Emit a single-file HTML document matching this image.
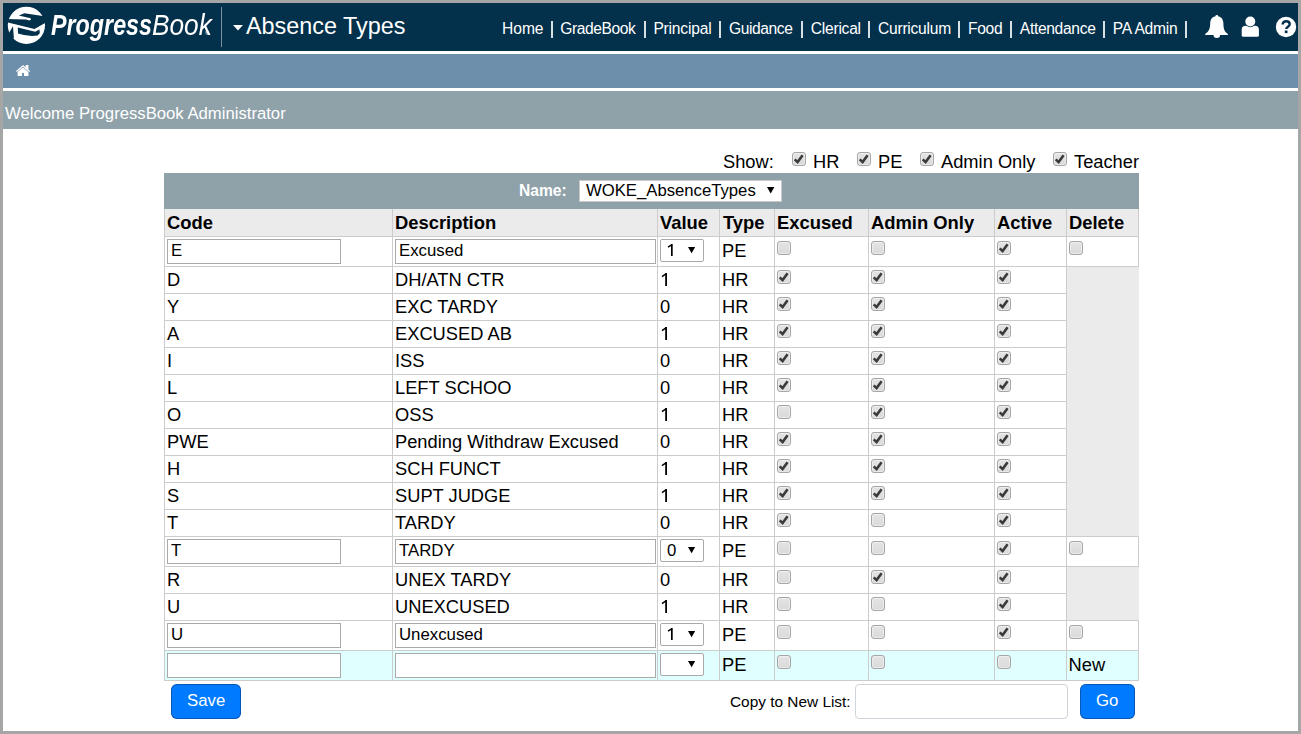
<!DOCTYPE html><html><head><meta charset="utf-8"><style>
html,body{margin:0;padding:0}
body{width:1301px;height:734px;position:relative;overflow:hidden;font-family:"Liberation Sans",sans-serif}
.r,.t,.cb,.inp,.sel,.sel1,.btn{position:absolute}
.t{white-space:pre}
.cb{width:12px;height:12px;border:1px solid #a6a6a6;border-radius:3px;background:linear-gradient(#e4e4e4,#dadada);box-shadow:inset 0 0 0 1px rgba(255,255,255,0.4)}
.cb svg{left:-1px!important;top:-1px!important}
.inp{height:23px;border:1px solid #a9a9a9;background:#fff}
.sel{width:42px;height:21px;border:1px solid #a9a9a9;border-radius:2px;background:#fff;margin-top:-1px}
.sel1{left:579px;top:180px;width:201px;height:20px;border:1px solid #c8c8c8;background:#fff}
.btn{height:35px;background:#007bff;border-radius:6px;box-shadow:inset 0 0 0 1px rgba(10,60,120,0.55);box-sizing:border-box}
</style></head><body><div class="r" style="left:0px;top:0px;width:1301px;height:734px;background:#a6a6a6;"></div>
<div class="r" style="left:3px;top:3px;width:1295px;height:728px;background:#fff;"></div>
<div class="r" style="left:3px;top:3px;width:1295px;height:48px;background:#03304b;"></div>
<div class="r" style="left:3px;top:54px;width:1295px;height:34px;background:#6d8fab;"></div>
<div class="r" style="left:3px;top:91px;width:1295px;height:38px;background:#8fa2aa;"></div>
<svg class="r" style="left:0;top:0" width="50" height="50" viewBox="0 0 50 50">
<defs><mask id="lm" maskUnits="userSpaceOnUse" x="0" y="0" width="50" height="50"><rect width="50" height="50" fill="#000"/><circle cx="26.4" cy="25.3" r="18.6" fill="#fff"/>
<g fill="#000">
<polygon points="5,18.9 26,19.6 29.3,20.4 31,19.4 30.6,18.3 18.8,15.5 24.4,13.2 46,16.4 46,22.5 34.5,28.9 8,22.4 5,22.2"/>
<polygon points="13,26.2 13.9,38.4 4,41 9.4,32.2"/>
<polygon points="17.8,27.6 35.2,31.8 39.5,29.4 39.8,33.2 37.5,35.4 32,36 24,35 18,33.6"/>
</g></mask></defs>
<rect width="50" height="50" fill="#fff" mask="url(#lm)"/></svg>
<div class="t" style="left:51px;top:9.5px;font-size:29.5px;line-height:29.5px;color:#fff;white-space:nowrap"><span style="display:inline-block;font-weight:bold;font-style:italic;transform:scaleX(0.79);transform-origin:0 0;width:101px">Progress</span><span style="display:inline-block;font-style:italic;transform:scaleX(0.89);transform-origin:0 0">Book</span></div>
<div class="t" style="left:205px;top:31px;font-size:5px;line-height:5px;color:#fff">&reg;</div>
<div class="r" style="left:221px;top:7px;width:1px;height:40px;background:#7d90a0;"></div>
<svg class="r" style="left:233px;top:25px" width="10" height="6" viewBox="0 0 10 6"><polygon points="0,0 10,0 5,5.5" fill="#fff"/></svg>
<div class="t" style="left:246px;top:15px;font-size:23.4px;line-height:23.4px;font-weight:normal;color:#fff;">Absence Types</div>
<div class="t" style="left:502.1px;top:21px;font-size:15.6px;line-height:15.6px;font-weight:normal;color:#fff;letter-spacing:-0.07px">Home</div>
<div class="t" style="left:560.2px;top:21px;font-size:15.6px;line-height:15.6px;font-weight:normal;color:#fff;letter-spacing:-0.4px">GradeBook</div>
<div class="t" style="left:653.4px;top:21px;font-size:15.6px;line-height:15.6px;font-weight:normal;color:#fff;letter-spacing:-0.2px">Principal</div>
<div class="t" style="left:728.9px;top:21px;font-size:15.6px;line-height:15.6px;font-weight:normal;color:#fff;letter-spacing:-0.39px">Guidance</div>
<div class="t" style="left:810.8px;top:21px;font-size:15.6px;line-height:15.6px;font-weight:normal;color:#fff;letter-spacing:-0.25px">Clerical</div>
<div class="t" style="left:878.1px;top:21px;font-size:15.6px;line-height:15.6px;font-weight:normal;color:#fff;letter-spacing:-0.26px">Curriculum</div>
<div class="t" style="left:968.0px;top:21px;font-size:15.6px;line-height:15.6px;font-weight:normal;color:#fff;letter-spacing:-0.33px">Food</div>
<div class="t" style="left:1019.8px;top:21px;font-size:15.6px;line-height:15.6px;font-weight:normal;color:#fff;letter-spacing:-0.32px">Attendance</div>
<div class="t" style="left:1112.8px;top:21px;font-size:15.6px;line-height:15.6px;font-weight:normal;color:#fff;letter-spacing:-0.21px">PA Admin</div>
<div class="r" style="left:551px;top:21px;width:2px;height:17px;background:rgba(255,255,255,0.85);"></div>
<div class="r" style="left:644px;top:21px;width:2px;height:17px;background:rgba(255,255,255,0.85);"></div>
<div class="r" style="left:719px;top:21px;width:2px;height:17px;background:rgba(255,255,255,0.85);"></div>
<div class="r" style="left:801px;top:21px;width:2px;height:17px;background:rgba(255,255,255,0.85);"></div>
<div class="r" style="left:868px;top:21px;width:2px;height:17px;background:rgba(255,255,255,0.85);"></div>
<div class="r" style="left:958px;top:21px;width:2px;height:17px;background:rgba(255,255,255,0.85);"></div>
<div class="r" style="left:1010px;top:21px;width:2px;height:17px;background:rgba(255,255,255,0.85);"></div>
<div class="r" style="left:1103px;top:21px;width:2px;height:17px;background:rgba(255,255,255,0.85);"></div>
<div class="r" style="left:1185px;top:21px;width:2px;height:17px;background:rgba(255,255,255,0.85);"></div>
<svg class="r" style="left:1204px;top:14px" width="26" height="26" viewBox="0 0 26 26">
<circle cx="12.8" cy="2.3" r="1.4" fill="#fff"/>
<path d="M12.8 2.2 C17.4 2.2 19.4 5.4 19.4 9.6 C19.4 15 20.6 18 23.9 20 L23.9 21 L1.2 21 L1.2 20 C4.5 18 6.2 15 6.2 9.6 C6.2 5.4 8.2 2.2 12.8 2.2 Z" fill="#fff"/>
<path d="M9.5 20.8 a3.3 3.2 0 0 0 6.6 0z" fill="#fff"/>
</svg>
<svg class="r" style="left:1241px;top:16px" width="20" height="22" viewBox="0 0 20 22">
<path d="M0.7 13.8 Q0.7 9.8 4.7 9.8 L13.9 9.8 Q17.9 9.8 17.9 13.8 L17.9 19.2 Q17.9 20.8 16.3 20.8 L2.3 20.8 Q0.7 20.8 0.7 19.2 Z" fill="#fff"/>
<circle cx="9.3" cy="5.5" r="5.7" fill="#03304b"/>
<circle cx="9.3" cy="5.5" r="5" fill="#fff"/>
</svg>
<svg class="r" style="left:1275px;top:16px" width="22" height="22" viewBox="0 0 22 22">
<circle cx="11" cy="11" r="10.2" fill="#fff"/>
<path d="M7.7 8.4 C7.7 6.2 9.3 5.3 11.1 5.3 C13.2 5.3 14.7 6.5 14.7 8.2 C14.7 10.6 11.2 10.9 11.2 13.1" stroke="#03304b" stroke-width="2.4" fill="none"/>
<rect x="9.8" y="14.5" width="2.7" height="2.6" fill="#03304b"/>
</svg>
<svg class="r" style="left:15px;top:64px" width="16" height="13" viewBox="0 0 16 13">
<path d="M1 7 L8 1 L10.6 3.2 L10.6 1 L13.4 1 L13.4 5.6 L15.2 7.2 L14.2 8.1 L8 2.8 L1.9 8.1z" fill="#fff"/>
<path d="M2.6 8 L8 3.5 L13.4 8 L13.4 12 L9 12 L9 9 L7 9 L7 12 L2.6 12z" fill="#fff"/>
</svg>
<div class="t" style="left:5px;top:106px;font-size:16.7px;line-height:16.7px;font-weight:normal;color:#fff;">Welcome ProgressBook Administrator</div>
<div class="t" style="left:723px;top:153px;font-size:18.3px;line-height:18.3px;font-weight:normal;color:#000;">Show:</div>
<div class="cb" style="left:792px;top:152px"><svg width="14" height="14" viewBox="0 0 14 14" style="position:absolute;left:0;top:0"><path d="M2.7 7.4 L5.6 10.1 L10.6 3.3" fill="none" stroke="#3a3a3a" stroke-width="2.6" stroke-linejoin="miter" stroke-linecap="butt"/></svg></div>
<div class="t" style="left:813px;top:153px;font-size:18.3px;line-height:18.3px;font-weight:normal;color:#000;">HR</div>
<div class="cb" style="left:857px;top:152px"><svg width="14" height="14" viewBox="0 0 14 14" style="position:absolute;left:0;top:0"><path d="M2.7 7.4 L5.6 10.1 L10.6 3.3" fill="none" stroke="#3a3a3a" stroke-width="2.6" stroke-linejoin="miter" stroke-linecap="butt"/></svg></div>
<div class="t" style="left:878px;top:153px;font-size:18.3px;line-height:18.3px;font-weight:normal;color:#000;">PE</div>
<div class="cb" style="left:920px;top:152px"><svg width="14" height="14" viewBox="0 0 14 14" style="position:absolute;left:0;top:0"><path d="M2.7 7.4 L5.6 10.1 L10.6 3.3" fill="none" stroke="#3a3a3a" stroke-width="2.6" stroke-linejoin="miter" stroke-linecap="butt"/></svg></div>
<div class="t" style="left:941px;top:153px;font-size:18.3px;line-height:18.3px;font-weight:normal;color:#000;">Admin Only</div>
<div class="cb" style="left:1053px;top:152px"><svg width="14" height="14" viewBox="0 0 14 14" style="position:absolute;left:0;top:0"><path d="M2.7 7.4 L5.6 10.1 L10.6 3.3" fill="none" stroke="#3a3a3a" stroke-width="2.6" stroke-linejoin="miter" stroke-linecap="butt"/></svg></div>
<div class="t" style="left:1074px;top:153px;font-size:18.3px;line-height:18.3px;font-weight:normal;color:#000;">Teacher</div>
<div class="r" style="left:164px;top:173px;width:975px;height:36px;background:#8fa2aa;"></div>
<div class="t" style="left:519px;top:183px;font-size:15.6px;line-height:15.6px;font-weight:bold;color:#fff;">Name:</div>
<div class="sel1"></div>
<div class="t" style="left:586px;top:183px;font-size:16.7px;line-height:16.7px;font-weight:normal;color:#000;">WOKE_AbsenceTypes</div>
<svg class="r" style="left:767px;top:187px" width="8" height="7" viewBox="0 0 8 7"><polygon points="0,0 7.4,0 3.7,6.5" fill="#000"/></svg>
<div class="r" style="left:164px;top:209px;width:975px;height:28px;background:#ebebeb;"></div>
<div class="t" style="left:167px;top:214px;font-size:18.4px;line-height:18.4px;font-weight:bold;color:#000;">Code</div>
<div class="t" style="left:395px;top:214px;font-size:18.4px;line-height:18.4px;font-weight:bold;color:#000;">Description</div>
<div class="t" style="left:660px;top:214px;font-size:18.4px;line-height:18.4px;font-weight:bold;color:#000;">Value</div>
<div class="t" style="left:723px;top:214px;font-size:18.4px;line-height:18.4px;font-weight:bold;color:#000;">Type</div>
<div class="t" style="left:777px;top:214px;font-size:18.4px;line-height:18.4px;font-weight:bold;color:#000;">Excused</div>
<div class="t" style="left:871px;top:214px;font-size:18.4px;line-height:18.4px;font-weight:bold;color:#000;">Admin Only</div>
<div class="t" style="left:997px;top:214px;font-size:18.4px;line-height:18.4px;font-weight:bold;color:#000;">Active</div>
<div class="t" style="left:1069px;top:214px;font-size:18.4px;line-height:18.4px;font-weight:bold;color:#000;">Delete</div>
<div class="inp" style="left:167px;top:239px;width:172px"></div>
<div class="inp" style="left:395px;top:239px;width:259px"></div>
<div class="sel" style="left:660px;top:240px"></div>
<svg class="r" style="left:688px;top:247px" width="8" height="7" viewBox="0 0 8 7"><polygon points="0,0 7.2,0 3.6,6.2" fill="#000"/></svg>
<div class="t" style="left:171px;top:243px;font-size:16.8px;line-height:16.8px;font-weight:normal;color:#000;">E</div>
<div class="t" style="left:399px;top:243px;font-size:16.8px;line-height:16.8px;font-weight:normal;color:#000;">Excused</div>
<svg class="r" style="left:667.0px;top:244px" width="6.7" height="12" viewBox="0 0 6.7 12"><rect x="4.0" y="0" width="1.7" height="12" fill="#000"/><path d="M5.02 0.63 L1 3.2" stroke="#000" stroke-width="1.4" fill="none"/></svg>
<div class="t" style="left:722px;top:242px;font-size:18.3px;line-height:18.3px;font-weight:normal;color:#000;">PE</div>
<div class="cb" style="left:777px;top:241px"></div>
<div class="cb" style="left:871px;top:241px"></div>
<div class="cb" style="left:997px;top:241px"><svg width="14" height="14" viewBox="0 0 14 14" style="position:absolute;left:0;top:0"><path d="M2.7 7.4 L5.6 10.1 L10.6 3.3" fill="none" stroke="#3a3a3a" stroke-width="2.6" stroke-linejoin="miter" stroke-linecap="butt"/></svg></div>
<div class="cb" style="left:1069px;top:241px"></div>
<div class="t" style="left:167px;top:271px;font-size:18.3px;line-height:18.3px;font-weight:normal;color:#000;">D</div>
<div class="t" style="left:395px;top:271px;font-size:18.3px;line-height:18.3px;font-weight:normal;color:#000;">DH/ATN CTR</div>
<svg class="r" style="left:660.8px;top:273px" width="7.0" height="13" viewBox="0 0 7.0 13"><rect x="4.2" y="0" width="1.8" height="13" fill="#000"/><path d="M5.28 0.675 L1 3.6" stroke="#000" stroke-width="1.5" fill="none"/></svg>
<div class="t" style="left:722px;top:271px;font-size:18.3px;line-height:18.3px;font-weight:normal;color:#000;">HR</div>
<div class="cb" style="left:777px;top:270px"><svg width="14" height="14" viewBox="0 0 14 14" style="position:absolute;left:0;top:0"><path d="M2.7 7.4 L5.6 10.1 L10.6 3.3" fill="none" stroke="#3a3a3a" stroke-width="2.6" stroke-linejoin="miter" stroke-linecap="butt"/></svg></div>
<div class="cb" style="left:871px;top:270px"><svg width="14" height="14" viewBox="0 0 14 14" style="position:absolute;left:0;top:0"><path d="M2.7 7.4 L5.6 10.1 L10.6 3.3" fill="none" stroke="#3a3a3a" stroke-width="2.6" stroke-linejoin="miter" stroke-linecap="butt"/></svg></div>
<div class="cb" style="left:997px;top:270px"><svg width="14" height="14" viewBox="0 0 14 14" style="position:absolute;left:0;top:0"><path d="M2.7 7.4 L5.6 10.1 L10.6 3.3" fill="none" stroke="#3a3a3a" stroke-width="2.6" stroke-linejoin="miter" stroke-linecap="butt"/></svg></div>
<div class="t" style="left:167px;top:298px;font-size:18.3px;line-height:18.3px;font-weight:normal;color:#000;">Y</div>
<div class="t" style="left:395px;top:298px;font-size:18.3px;line-height:18.3px;font-weight:normal;color:#000;">EXC TARDY</div>
<div class="t" style="left:660px;top:298px;font-size:18.3px;line-height:18.3px;font-weight:normal;color:#000;">0</div>
<div class="t" style="left:722px;top:298px;font-size:18.3px;line-height:18.3px;font-weight:normal;color:#000;">HR</div>
<div class="cb" style="left:777px;top:297px"><svg width="14" height="14" viewBox="0 0 14 14" style="position:absolute;left:0;top:0"><path d="M2.7 7.4 L5.6 10.1 L10.6 3.3" fill="none" stroke="#3a3a3a" stroke-width="2.6" stroke-linejoin="miter" stroke-linecap="butt"/></svg></div>
<div class="cb" style="left:871px;top:297px"><svg width="14" height="14" viewBox="0 0 14 14" style="position:absolute;left:0;top:0"><path d="M2.7 7.4 L5.6 10.1 L10.6 3.3" fill="none" stroke="#3a3a3a" stroke-width="2.6" stroke-linejoin="miter" stroke-linecap="butt"/></svg></div>
<div class="cb" style="left:997px;top:297px"><svg width="14" height="14" viewBox="0 0 14 14" style="position:absolute;left:0;top:0"><path d="M2.7 7.4 L5.6 10.1 L10.6 3.3" fill="none" stroke="#3a3a3a" stroke-width="2.6" stroke-linejoin="miter" stroke-linecap="butt"/></svg></div>
<div class="t" style="left:167px;top:325px;font-size:18.3px;line-height:18.3px;font-weight:normal;color:#000;">A</div>
<div class="t" style="left:395px;top:325px;font-size:18.3px;line-height:18.3px;font-weight:normal;color:#000;">EXCUSED AB</div>
<svg class="r" style="left:660.8px;top:327px" width="7.0" height="13" viewBox="0 0 7.0 13"><rect x="4.2" y="0" width="1.8" height="13" fill="#000"/><path d="M5.28 0.675 L1 3.6" stroke="#000" stroke-width="1.5" fill="none"/></svg>
<div class="t" style="left:722px;top:325px;font-size:18.3px;line-height:18.3px;font-weight:normal;color:#000;">HR</div>
<div class="cb" style="left:777px;top:324px"><svg width="14" height="14" viewBox="0 0 14 14" style="position:absolute;left:0;top:0"><path d="M2.7 7.4 L5.6 10.1 L10.6 3.3" fill="none" stroke="#3a3a3a" stroke-width="2.6" stroke-linejoin="miter" stroke-linecap="butt"/></svg></div>
<div class="cb" style="left:871px;top:324px"><svg width="14" height="14" viewBox="0 0 14 14" style="position:absolute;left:0;top:0"><path d="M2.7 7.4 L5.6 10.1 L10.6 3.3" fill="none" stroke="#3a3a3a" stroke-width="2.6" stroke-linejoin="miter" stroke-linecap="butt"/></svg></div>
<div class="cb" style="left:997px;top:324px"><svg width="14" height="14" viewBox="0 0 14 14" style="position:absolute;left:0;top:0"><path d="M2.7 7.4 L5.6 10.1 L10.6 3.3" fill="none" stroke="#3a3a3a" stroke-width="2.6" stroke-linejoin="miter" stroke-linecap="butt"/></svg></div>
<div class="t" style="left:167px;top:352px;font-size:18.3px;line-height:18.3px;font-weight:normal;color:#000;">I</div>
<div class="t" style="left:395px;top:352px;font-size:18.3px;line-height:18.3px;font-weight:normal;color:#000;">ISS</div>
<div class="t" style="left:660px;top:352px;font-size:18.3px;line-height:18.3px;font-weight:normal;color:#000;">0</div>
<div class="t" style="left:722px;top:352px;font-size:18.3px;line-height:18.3px;font-weight:normal;color:#000;">HR</div>
<div class="cb" style="left:777px;top:351px"><svg width="14" height="14" viewBox="0 0 14 14" style="position:absolute;left:0;top:0"><path d="M2.7 7.4 L5.6 10.1 L10.6 3.3" fill="none" stroke="#3a3a3a" stroke-width="2.6" stroke-linejoin="miter" stroke-linecap="butt"/></svg></div>
<div class="cb" style="left:871px;top:351px"><svg width="14" height="14" viewBox="0 0 14 14" style="position:absolute;left:0;top:0"><path d="M2.7 7.4 L5.6 10.1 L10.6 3.3" fill="none" stroke="#3a3a3a" stroke-width="2.6" stroke-linejoin="miter" stroke-linecap="butt"/></svg></div>
<div class="cb" style="left:997px;top:351px"><svg width="14" height="14" viewBox="0 0 14 14" style="position:absolute;left:0;top:0"><path d="M2.7 7.4 L5.6 10.1 L10.6 3.3" fill="none" stroke="#3a3a3a" stroke-width="2.6" stroke-linejoin="miter" stroke-linecap="butt"/></svg></div>
<div class="t" style="left:167px;top:379px;font-size:18.3px;line-height:18.3px;font-weight:normal;color:#000;">L</div>
<div class="t" style="left:395px;top:379px;font-size:18.3px;line-height:18.3px;font-weight:normal;color:#000;">LEFT SCHOO</div>
<div class="t" style="left:660px;top:379px;font-size:18.3px;line-height:18.3px;font-weight:normal;color:#000;">0</div>
<div class="t" style="left:722px;top:379px;font-size:18.3px;line-height:18.3px;font-weight:normal;color:#000;">HR</div>
<div class="cb" style="left:777px;top:378px"><svg width="14" height="14" viewBox="0 0 14 14" style="position:absolute;left:0;top:0"><path d="M2.7 7.4 L5.6 10.1 L10.6 3.3" fill="none" stroke="#3a3a3a" stroke-width="2.6" stroke-linejoin="miter" stroke-linecap="butt"/></svg></div>
<div class="cb" style="left:871px;top:378px"><svg width="14" height="14" viewBox="0 0 14 14" style="position:absolute;left:0;top:0"><path d="M2.7 7.4 L5.6 10.1 L10.6 3.3" fill="none" stroke="#3a3a3a" stroke-width="2.6" stroke-linejoin="miter" stroke-linecap="butt"/></svg></div>
<div class="cb" style="left:997px;top:378px"><svg width="14" height="14" viewBox="0 0 14 14" style="position:absolute;left:0;top:0"><path d="M2.7 7.4 L5.6 10.1 L10.6 3.3" fill="none" stroke="#3a3a3a" stroke-width="2.6" stroke-linejoin="miter" stroke-linecap="butt"/></svg></div>
<div class="t" style="left:167px;top:406px;font-size:18.3px;line-height:18.3px;font-weight:normal;color:#000;">O</div>
<div class="t" style="left:395px;top:406px;font-size:18.3px;line-height:18.3px;font-weight:normal;color:#000;">OSS</div>
<svg class="r" style="left:660.8px;top:408px" width="7.0" height="13" viewBox="0 0 7.0 13"><rect x="4.2" y="0" width="1.8" height="13" fill="#000"/><path d="M5.28 0.675 L1 3.6" stroke="#000" stroke-width="1.5" fill="none"/></svg>
<div class="t" style="left:722px;top:406px;font-size:18.3px;line-height:18.3px;font-weight:normal;color:#000;">HR</div>
<div class="cb" style="left:777px;top:405px"></div>
<div class="cb" style="left:871px;top:405px"><svg width="14" height="14" viewBox="0 0 14 14" style="position:absolute;left:0;top:0"><path d="M2.7 7.4 L5.6 10.1 L10.6 3.3" fill="none" stroke="#3a3a3a" stroke-width="2.6" stroke-linejoin="miter" stroke-linecap="butt"/></svg></div>
<div class="cb" style="left:997px;top:405px"><svg width="14" height="14" viewBox="0 0 14 14" style="position:absolute;left:0;top:0"><path d="M2.7 7.4 L5.6 10.1 L10.6 3.3" fill="none" stroke="#3a3a3a" stroke-width="2.6" stroke-linejoin="miter" stroke-linecap="butt"/></svg></div>
<div class="t" style="left:167px;top:433px;font-size:18.3px;line-height:18.3px;font-weight:normal;color:#000;">PWE</div>
<div class="t" style="left:395px;top:433px;font-size:18.3px;line-height:18.3px;font-weight:normal;color:#000;">Pending Withdraw Excused</div>
<div class="t" style="left:660px;top:433px;font-size:18.3px;line-height:18.3px;font-weight:normal;color:#000;">0</div>
<div class="t" style="left:722px;top:433px;font-size:18.3px;line-height:18.3px;font-weight:normal;color:#000;">HR</div>
<div class="cb" style="left:777px;top:432px"><svg width="14" height="14" viewBox="0 0 14 14" style="position:absolute;left:0;top:0"><path d="M2.7 7.4 L5.6 10.1 L10.6 3.3" fill="none" stroke="#3a3a3a" stroke-width="2.6" stroke-linejoin="miter" stroke-linecap="butt"/></svg></div>
<div class="cb" style="left:871px;top:432px"><svg width="14" height="14" viewBox="0 0 14 14" style="position:absolute;left:0;top:0"><path d="M2.7 7.4 L5.6 10.1 L10.6 3.3" fill="none" stroke="#3a3a3a" stroke-width="2.6" stroke-linejoin="miter" stroke-linecap="butt"/></svg></div>
<div class="cb" style="left:997px;top:432px"><svg width="14" height="14" viewBox="0 0 14 14" style="position:absolute;left:0;top:0"><path d="M2.7 7.4 L5.6 10.1 L10.6 3.3" fill="none" stroke="#3a3a3a" stroke-width="2.6" stroke-linejoin="miter" stroke-linecap="butt"/></svg></div>
<div class="t" style="left:167px;top:460px;font-size:18.3px;line-height:18.3px;font-weight:normal;color:#000;">H</div>
<div class="t" style="left:395px;top:460px;font-size:18.3px;line-height:18.3px;font-weight:normal;color:#000;">SCH FUNCT</div>
<svg class="r" style="left:660.8px;top:462px" width="7.0" height="13" viewBox="0 0 7.0 13"><rect x="4.2" y="0" width="1.8" height="13" fill="#000"/><path d="M5.28 0.675 L1 3.6" stroke="#000" stroke-width="1.5" fill="none"/></svg>
<div class="t" style="left:722px;top:460px;font-size:18.3px;line-height:18.3px;font-weight:normal;color:#000;">HR</div>
<div class="cb" style="left:777px;top:459px"><svg width="14" height="14" viewBox="0 0 14 14" style="position:absolute;left:0;top:0"><path d="M2.7 7.4 L5.6 10.1 L10.6 3.3" fill="none" stroke="#3a3a3a" stroke-width="2.6" stroke-linejoin="miter" stroke-linecap="butt"/></svg></div>
<div class="cb" style="left:871px;top:459px"><svg width="14" height="14" viewBox="0 0 14 14" style="position:absolute;left:0;top:0"><path d="M2.7 7.4 L5.6 10.1 L10.6 3.3" fill="none" stroke="#3a3a3a" stroke-width="2.6" stroke-linejoin="miter" stroke-linecap="butt"/></svg></div>
<div class="cb" style="left:997px;top:459px"><svg width="14" height="14" viewBox="0 0 14 14" style="position:absolute;left:0;top:0"><path d="M2.7 7.4 L5.6 10.1 L10.6 3.3" fill="none" stroke="#3a3a3a" stroke-width="2.6" stroke-linejoin="miter" stroke-linecap="butt"/></svg></div>
<div class="t" style="left:167px;top:487px;font-size:18.3px;line-height:18.3px;font-weight:normal;color:#000;">S</div>
<div class="t" style="left:395px;top:487px;font-size:18.3px;line-height:18.3px;font-weight:normal;color:#000;">SUPT JUDGE</div>
<svg class="r" style="left:660.8px;top:489px" width="7.0" height="13" viewBox="0 0 7.0 13"><rect x="4.2" y="0" width="1.8" height="13" fill="#000"/><path d="M5.28 0.675 L1 3.6" stroke="#000" stroke-width="1.5" fill="none"/></svg>
<div class="t" style="left:722px;top:487px;font-size:18.3px;line-height:18.3px;font-weight:normal;color:#000;">HR</div>
<div class="cb" style="left:777px;top:486px"><svg width="14" height="14" viewBox="0 0 14 14" style="position:absolute;left:0;top:0"><path d="M2.7 7.4 L5.6 10.1 L10.6 3.3" fill="none" stroke="#3a3a3a" stroke-width="2.6" stroke-linejoin="miter" stroke-linecap="butt"/></svg></div>
<div class="cb" style="left:871px;top:486px"><svg width="14" height="14" viewBox="0 0 14 14" style="position:absolute;left:0;top:0"><path d="M2.7 7.4 L5.6 10.1 L10.6 3.3" fill="none" stroke="#3a3a3a" stroke-width="2.6" stroke-linejoin="miter" stroke-linecap="butt"/></svg></div>
<div class="cb" style="left:997px;top:486px"><svg width="14" height="14" viewBox="0 0 14 14" style="position:absolute;left:0;top:0"><path d="M2.7 7.4 L5.6 10.1 L10.6 3.3" fill="none" stroke="#3a3a3a" stroke-width="2.6" stroke-linejoin="miter" stroke-linecap="butt"/></svg></div>
<div class="t" style="left:167px;top:514px;font-size:18.3px;line-height:18.3px;font-weight:normal;color:#000;">T</div>
<div class="t" style="left:395px;top:514px;font-size:18.3px;line-height:18.3px;font-weight:normal;color:#000;">TARDY</div>
<div class="t" style="left:660px;top:514px;font-size:18.3px;line-height:18.3px;font-weight:normal;color:#000;">0</div>
<div class="t" style="left:722px;top:514px;font-size:18.3px;line-height:18.3px;font-weight:normal;color:#000;">HR</div>
<div class="cb" style="left:777px;top:513px"><svg width="14" height="14" viewBox="0 0 14 14" style="position:absolute;left:0;top:0"><path d="M2.7 7.4 L5.6 10.1 L10.6 3.3" fill="none" stroke="#3a3a3a" stroke-width="2.6" stroke-linejoin="miter" stroke-linecap="butt"/></svg></div>
<div class="cb" style="left:871px;top:513px"></div>
<div class="cb" style="left:997px;top:513px"><svg width="14" height="14" viewBox="0 0 14 14" style="position:absolute;left:0;top:0"><path d="M2.7 7.4 L5.6 10.1 L10.6 3.3" fill="none" stroke="#3a3a3a" stroke-width="2.6" stroke-linejoin="miter" stroke-linecap="butt"/></svg></div>
<div class="inp" style="left:167px;top:539px;width:172px"></div>
<div class="inp" style="left:395px;top:539px;width:259px"></div>
<div class="sel" style="left:660px;top:540px"></div>
<svg class="r" style="left:688px;top:547px" width="8" height="7" viewBox="0 0 8 7"><polygon points="0,0 7.2,0 3.6,6.2" fill="#000"/></svg>
<div class="t" style="left:171px;top:543px;font-size:16.8px;line-height:16.8px;font-weight:normal;color:#000;">T</div>
<div class="t" style="left:399px;top:543px;font-size:16.8px;line-height:16.8px;font-weight:normal;color:#000;">TARDY</div>
<div class="t" style="left:667px;top:543px;font-size:16.8px;line-height:16.8px;font-weight:normal;color:#000;">0</div>
<div class="t" style="left:722px;top:542px;font-size:18.3px;line-height:18.3px;font-weight:normal;color:#000;">PE</div>
<div class="cb" style="left:777px;top:541px"></div>
<div class="cb" style="left:871px;top:541px"></div>
<div class="cb" style="left:997px;top:541px"><svg width="14" height="14" viewBox="0 0 14 14" style="position:absolute;left:0;top:0"><path d="M2.7 7.4 L5.6 10.1 L10.6 3.3" fill="none" stroke="#3a3a3a" stroke-width="2.6" stroke-linejoin="miter" stroke-linecap="butt"/></svg></div>
<div class="cb" style="left:1069px;top:541px"></div>
<div class="t" style="left:167px;top:571px;font-size:18.3px;line-height:18.3px;font-weight:normal;color:#000;">R</div>
<div class="t" style="left:395px;top:571px;font-size:18.3px;line-height:18.3px;font-weight:normal;color:#000;">UNEX TARDY</div>
<div class="t" style="left:660px;top:571px;font-size:18.3px;line-height:18.3px;font-weight:normal;color:#000;">0</div>
<div class="t" style="left:722px;top:571px;font-size:18.3px;line-height:18.3px;font-weight:normal;color:#000;">HR</div>
<div class="cb" style="left:777px;top:570px"></div>
<div class="cb" style="left:871px;top:570px"><svg width="14" height="14" viewBox="0 0 14 14" style="position:absolute;left:0;top:0"><path d="M2.7 7.4 L5.6 10.1 L10.6 3.3" fill="none" stroke="#3a3a3a" stroke-width="2.6" stroke-linejoin="miter" stroke-linecap="butt"/></svg></div>
<div class="cb" style="left:997px;top:570px"><svg width="14" height="14" viewBox="0 0 14 14" style="position:absolute;left:0;top:0"><path d="M2.7 7.4 L5.6 10.1 L10.6 3.3" fill="none" stroke="#3a3a3a" stroke-width="2.6" stroke-linejoin="miter" stroke-linecap="butt"/></svg></div>
<div class="t" style="left:167px;top:598px;font-size:18.3px;line-height:18.3px;font-weight:normal;color:#000;">U</div>
<div class="t" style="left:395px;top:598px;font-size:18.3px;line-height:18.3px;font-weight:normal;color:#000;">UNEXCUSED</div>
<svg class="r" style="left:660.8px;top:600px" width="7.0" height="13" viewBox="0 0 7.0 13"><rect x="4.2" y="0" width="1.8" height="13" fill="#000"/><path d="M5.28 0.675 L1 3.6" stroke="#000" stroke-width="1.5" fill="none"/></svg>
<div class="t" style="left:722px;top:598px;font-size:18.3px;line-height:18.3px;font-weight:normal;color:#000;">HR</div>
<div class="cb" style="left:777px;top:597px"></div>
<div class="cb" style="left:871px;top:597px"></div>
<div class="cb" style="left:997px;top:597px"><svg width="14" height="14" viewBox="0 0 14 14" style="position:absolute;left:0;top:0"><path d="M2.7 7.4 L5.6 10.1 L10.6 3.3" fill="none" stroke="#3a3a3a" stroke-width="2.6" stroke-linejoin="miter" stroke-linecap="butt"/></svg></div>
<div class="inp" style="left:167px;top:623px;width:172px"></div>
<div class="inp" style="left:395px;top:623px;width:259px"></div>
<div class="sel" style="left:660px;top:624px"></div>
<svg class="r" style="left:688px;top:631px" width="8" height="7" viewBox="0 0 8 7"><polygon points="0,0 7.2,0 3.6,6.2" fill="#000"/></svg>
<div class="t" style="left:171px;top:627px;font-size:16.8px;line-height:16.8px;font-weight:normal;color:#000;">U</div>
<div class="t" style="left:399px;top:627px;font-size:16.8px;line-height:16.8px;font-weight:normal;color:#000;">Unexcused</div>
<svg class="r" style="left:667.0px;top:628px" width="6.7" height="12" viewBox="0 0 6.7 12"><rect x="4.0" y="0" width="1.7" height="12" fill="#000"/><path d="M5.02 0.63 L1 3.2" stroke="#000" stroke-width="1.4" fill="none"/></svg>
<div class="t" style="left:722px;top:626px;font-size:18.3px;line-height:18.3px;font-weight:normal;color:#000;">PE</div>
<div class="cb" style="left:777px;top:625px"></div>
<div class="cb" style="left:871px;top:625px"></div>
<div class="cb" style="left:997px;top:625px"><svg width="14" height="14" viewBox="0 0 14 14" style="position:absolute;left:0;top:0"><path d="M2.7 7.4 L5.6 10.1 L10.6 3.3" fill="none" stroke="#3a3a3a" stroke-width="2.6" stroke-linejoin="miter" stroke-linecap="butt"/></svg></div>
<div class="cb" style="left:1069px;top:625px"></div>
<div class="r" style="left:164px;top:651px;width:974px;height:29px;background:#e0ffff;"></div>
<div class="inp" style="left:167px;top:653px;width:172px"></div>
<div class="inp" style="left:395px;top:653px;width:259px"></div>
<div class="sel" style="left:660px;top:654px"></div>
<svg class="r" style="left:688px;top:661px" width="8" height="7" viewBox="0 0 8 7"><polygon points="0,0 7.2,0 3.6,6.2" fill="#000"/></svg>
<div class="t" style="left:722px;top:656px;font-size:18.3px;line-height:18.3px;font-weight:normal;color:#000;">PE</div>
<div class="cb" style="left:777px;top:655px"></div>
<div class="cb" style="left:871px;top:655px"></div>
<div class="cb" style="left:997px;top:655px"></div>
<div class="t" style="left:1068.6px;top:656px;font-size:18.3px;line-height:18.3px;font-weight:normal;color:#000;">New</div>
<div class="r" style="left:1067px;top:267px;width:72px;height:269px;background:#ebebeb;"></div>
<div class="r" style="left:1067px;top:567px;width:72px;height:53px;background:#ebebeb;"></div>
<div class="r" style="left:164px;top:236px;width:975px;height:1px;background:#cccccc;"></div>
<div class="r" style="left:164px;top:266px;width:975px;height:1px;background:#cccccc;"></div>
<div class="r" style="left:164px;top:293px;width:975px;height:1px;background:#cccccc;"></div>
<div class="r" style="left:164px;top:320px;width:975px;height:1px;background:#cccccc;"></div>
<div class="r" style="left:164px;top:347px;width:975px;height:1px;background:#cccccc;"></div>
<div class="r" style="left:164px;top:374px;width:975px;height:1px;background:#cccccc;"></div>
<div class="r" style="left:164px;top:401px;width:975px;height:1px;background:#cccccc;"></div>
<div class="r" style="left:164px;top:428px;width:975px;height:1px;background:#cccccc;"></div>
<div class="r" style="left:164px;top:455px;width:975px;height:1px;background:#cccccc;"></div>
<div class="r" style="left:164px;top:482px;width:975px;height:1px;background:#cccccc;"></div>
<div class="r" style="left:164px;top:509px;width:975px;height:1px;background:#cccccc;"></div>
<div class="r" style="left:164px;top:536px;width:975px;height:1px;background:#cccccc;"></div>
<div class="r" style="left:164px;top:566px;width:975px;height:1px;background:#cccccc;"></div>
<div class="r" style="left:164px;top:593px;width:975px;height:1px;background:#cccccc;"></div>
<div class="r" style="left:164px;top:620px;width:975px;height:1px;background:#cccccc;"></div>
<div class="r" style="left:164px;top:650px;width:975px;height:1px;background:#cccccc;"></div>
<div class="r" style="left:164px;top:680px;width:975px;height:1px;background:#cccccc;"></div>
<div class="r" style="left:164px;top:209px;width:1px;height:472px;background:#cccccc;"></div>
<div class="r" style="left:392px;top:209px;width:1px;height:472px;background:#cccccc;"></div>
<div class="r" style="left:657px;top:209px;width:1px;height:472px;background:#cccccc;"></div>
<div class="r" style="left:719px;top:209px;width:1px;height:472px;background:#cccccc;"></div>
<div class="r" style="left:774px;top:209px;width:1px;height:472px;background:#cccccc;"></div>
<div class="r" style="left:868px;top:209px;width:1px;height:472px;background:#cccccc;"></div>
<div class="r" style="left:994px;top:209px;width:1px;height:472px;background:#cccccc;"></div>
<div class="r" style="left:1066px;top:209px;width:1px;height:472px;background:#cccccc;"></div>
<div class="r" style="left:1138px;top:209px;width:1px;height:472px;background:#cccccc;"></div>
<div class="r" style="left:1067px;top:267px;width:72px;height:269px;background:#ebebeb;"></div>
<div class="r" style="left:1067px;top:567px;width:72px;height:53px;background:#ebebeb;"></div>
<div class="btn" style="left:171px;top:684px;width:70px"></div>
<div class="t" style="left:187px;top:693px;font-size:16.8px;line-height:16.8px;font-weight:normal;color:#fff;">Save</div>
<div class="t" style="left:730px;top:694px;font-size:15.4px;line-height:15.4px;font-weight:normal;color:#000;">Copy to New List:</div>
<div class="r" style="left:855px;top:684px;width:211px;height:33px;border:1px solid #ced4da;border-radius:4px;background:#fff"></div>
<div class="btn" style="left:1080px;top:684px;width:55px"></div>
<div class="t" style="left:1096px;top:693px;font-size:16.8px;line-height:16.8px;font-weight:normal;color:#fff;">Go</div></body></html>
